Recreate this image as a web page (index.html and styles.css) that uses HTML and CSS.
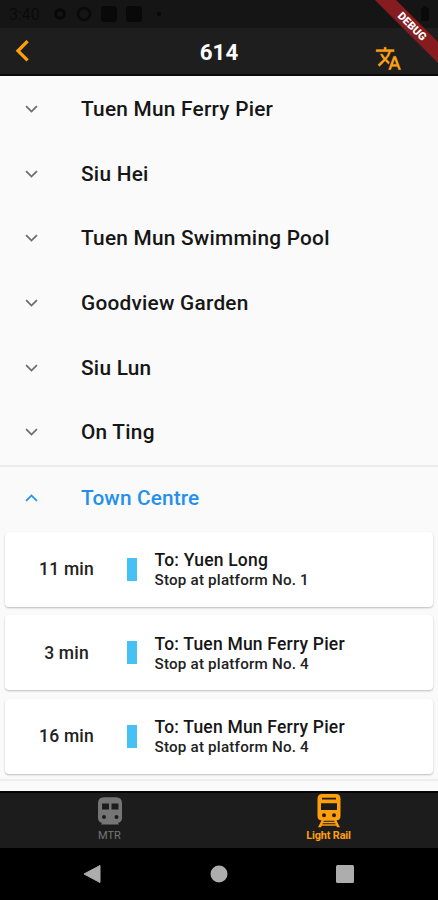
FILE: index.html
```html
<!DOCTYPE html>
<html lang="en">
<head>
<meta charset="utf-8">
<meta name="viewport" content="width=device-width">
<title>614</title>
<link rel="stylesheet" href="styles.css">
</head>
<body>
<div class="screen">
  <div class="status">
    <span class="clock">3:40</span>
    <svg class="status-icons" width="116" height="18" viewBox="0 0 116 18">
      <circle cx="8" cy="9" r="4.3" fill="none" stroke="#080808" stroke-width="3"/>
      <circle cx="32" cy="9" r="6" fill="none" stroke="#0a0a0a" stroke-width="2.6"/>
      <rect x="49" y="1" width="16" height="16" rx="3" fill="#090909"/>
      <rect x="74" y="1" width="16" height="16" rx="3" fill="#090909"/>
      <circle cx="107" cy="9" r="2" fill="#080808"/>
    </svg>
    <svg class="battery" width="10" height="16" viewBox="0 0 10 16"><path d="M3 0h4v2h2v13H1V2h2z" fill="#0a0a0a"/></svg>
  </div>
  <header class="appbar">
    <svg class="back" width="16" height="26" viewBox="0 0 16 26"><path d="M12.600 3.200 3 12.800l9.600 9.600" fill="none" stroke="#ff9f0c" stroke-width="3.300"/></svg>
    <h1 class="title">614</h1>
    <svg class="translate" width="27" height="27" viewBox="0 0 24 24"><path fill="#ff9f16" stroke="#ff9f16" stroke-width=".3" d="M12.870 15.070l-2.540-2.510.030-.030A17.520 17.520 0 0 0 14.070 6H17V4h-7V2H8v2H1v1.990h11.170C11.500 7.920 10.440 9.750 9 11.350 8.070 10.320 7.300 9.190 6.690 8h-2c.730 1.630 1.730 3.170 2.980 4.560l-5.090 5.020L4 19l5-5 3.110 3.110.760-2.040zM18.500 10h-2L12 22h2l1.120-3h4.750L21 22h2l-4.500-12zm-2.620 7l1.620-4.330L19.120 17h-3.240z"/></svg>
  </header>
  <main class="list">
    <div class="row"><svg class="chev" viewBox="0 0 14 10"><path d="m1.200 2 5.800 5.800L12.800 2"/></svg><span>Tuen Mun Ferry Pier</span></div>
    <div class="row"><svg class="chev" viewBox="0 0 14 10"><path d="m1.200 2 5.800 5.800L12.800 2"/></svg><span>Siu Hei</span></div>
    <div class="row"><svg class="chev" viewBox="0 0 14 10"><path d="m1.200 2 5.800 5.800L12.800 2"/></svg><span>Tuen Mun Swimming Pool</span></div>
    <div class="row"><svg class="chev" viewBox="0 0 14 10"><path d="m1.200 2 5.800 5.800L12.800 2"/></svg><span>Goodview Garden</span></div>
    <div class="row"><svg class="chev" viewBox="0 0 14 10"><path d="m1.200 2 5.800 5.800L12.800 2"/></svg><span>Siu Lun</span></div>
    <div class="row"><svg class="chev" viewBox="0 0 14 10"><path d="m1.200 2 5.800 5.800L12.800 2"/></svg><span>On Ting</span></div>
    <section class="open">
      <div class="row active"><svg class="chev" viewBox="0 0 14 10"><path d="m1.200 8 5.800-5.800L12.800 8"/></svg><span>Town Centre</span></div>
      <div class="cards">
        <article class="card"><div class="time">11 min</div><i class="bar"></i><div><div class="dest">To: Yuen Long</div><div class="stop">Stop at platform No. 1</div></div></article>
        <article class="card"><div class="time">3 min</div><i class="bar"></i><div><div class="dest">To: Tuen Mun Ferry Pier</div><div class="stop">Stop at platform No. 4</div></div></article>
        <article class="card"><div class="time">16 min</div><i class="bar"></i><div><div class="dest">To: Tuen Mun Ferry Pier</div><div class="stop">Stop at platform No. 4</div></div></article>
      </div>
    </section>
  </main>
  <nav class="tabs">
    <div class="tab">
      <svg width="36" height="36" viewBox="0 0 36 36"><path fill="#757575" fill-rule="evenodd" d="M12 4.300h12q6 0 6 6V25q0 4-4 5l1 1.500H9l1-1.500q-4-1-4-5V10.300q0-6 6-6zM10 10.500v6h7v-6zm9.500 0v6h7v-6zM12 22a2 2 0 1 0 0 4 2 2 0 0 0 0-4zm12.500 0a2 2 0 1 0 0 4 2 2 0 0 0 0-4z"/></svg>
      <span>MTR</span>
    </div>
    <div class="tab on">
      <svg width="36" height="36" viewBox="0 0 36 36"><path fill="#ff9f0c" fill-rule="evenodd" d="M11 1h14q4.500 0 4.500 5v17q0 4-4 4.500L29 34.300h-3l-.8-1.500H10.800l-.8 1.500H7l3.500-6.800q-4-.5-4-4.500V6q0-5 4.500-5zM11 4.800v1.800h14V4.800zM10 10.300v6.800h16v-6.800zM13 20.300a2 2 0 1 0 0 4 2 2 0 0 0 0-4zm10 0a2 2 0 1 0 0 4 2 2 0 0 0 0-4zM12.800 27.800l-.5 1h11.400l-.5-1zm-1 2.500-.4 1h13.200l-.4-1z"/></svg>
      <span>Light Rail</span>
    </div>
  </nav>
  <div class="sysnav">
    <svg width="18" height="20" viewBox="0 0 18 20"><path d="M17 1.500v17L1 10z" fill="#adadad" stroke="#adadad" stroke-linejoin="round"/></svg>
    <svg width="18" height="18" viewBox="0 0 18 18"><circle cx="9" cy="9" r="8.500" fill="#adadad"/></svg>
    <svg width="18" height="18" viewBox="0 0 18 18"><rect width="18" height="18" rx="1.500" fill="#adadad"/></svg>
  </div>
  <div class="debug"><span>DEBUG</span></div>
</div>
</body>
</html>
```
FILE: styles.css
```css
* { box-sizing: border-box; }
body { margin: 0; font-family: Roboto, sans-serif; }
svg { display: block; flex: none; }
.screen { position: relative; width: 438px; height: 900px; overflow: hidden; display: flex; flex-direction: column; background: #fafafa; }
.status { height: 28px; background: #151515; display: flex; align-items: center; padding: 0 8px 0 9px; }
.clock { width: 43px; font-size: 16px; color: #0b0b0b; }
.battery { margin-left: auto; }
.appbar { height: 48px; background: #1e1e1e; border-bottom: 2px solid #0a0a0a; display: grid; grid-template-columns: 100px 1fr 100px; align-items: center; }
.back { margin-left: 15px; }
.title { margin: 2px 0 0; text-align: center; color: #fff; font-size: 22.300px; font-weight: 700; line-height: 26px; }
.translate { margin: 14px 0 0 37px; }
.list { height: 715px; padding-top: 1px; overflow: hidden; }
.row { height: 64.600px; display: flex; align-items: center; padding-left: 25px; font-size: 20.800px; font-weight: 500; line-height: 24px; letter-spacing: .25px; color: #161616; }
.chev { width: 13px; height: 10px; margin-right: 43px; }
.chev path { fill: none; stroke: #6c6c6c; stroke-width: 1.900; }
.open { border-top: 2px solid #ebebeb; border-bottom: 2px solid #eee; height: 316px; }
.active { height: 62px; color: #2490ed; letter-spacing: .15px; }
.active .chev path { stroke: #2490ed; }
.cards { padding: 3px 5px 0; display: flex; flex-direction: column; gap: 8.600px; }
.card { height: 75px; background: #fff; border-radius: 4px; box-shadow: 0 1px 2px rgba(0,0,0,.25); display: grid; grid-template-columns: 122px 10px 1fr; align-items: center; }
.card > div:last-child { padding-left: 17.500px; padding-top: 1px; }
.time { text-align: center; padding-left: 1px; font-size: 17.500px; font-weight: 500; color: #222; letter-spacing: .2px; }
.bar { width: 10px; height: 23px; background: #47c1f5; }
.dest { font-size: 17.500px; line-height: 21px; font-weight: 500; color: #161616; letter-spacing: .2px; }
.stop { font-size: 15.200px; line-height: 18px; font-weight: 500; color: #222; letter-spacing: .2px; }
.tabs { height: 57px; background: #1c1c1c; border-top: 2px solid #050505; display: grid; grid-template-columns: 1fr 1fr; }
.tab { display: flex; flex-direction: column; align-items: center; color: #757575; font-size: 11px; line-height: 14px; }
.tab.on { color: #ff9f0c; font-weight: 700; font-size: 10.900px; letter-spacing: -.15px; }
.sysnav { height: 52px; background: #000; display: flex; align-items: center; justify-content: space-between; padding: 0 84px 0 83px; }
.debug { position: absolute; left: 351.500px; top: 19px; width: 120px; height: 15px; transform: rotate(45deg); background: #861b20; color: #fff; font-size: 11px; font-weight: 900; line-height: 15px; text-align: center; }
```
